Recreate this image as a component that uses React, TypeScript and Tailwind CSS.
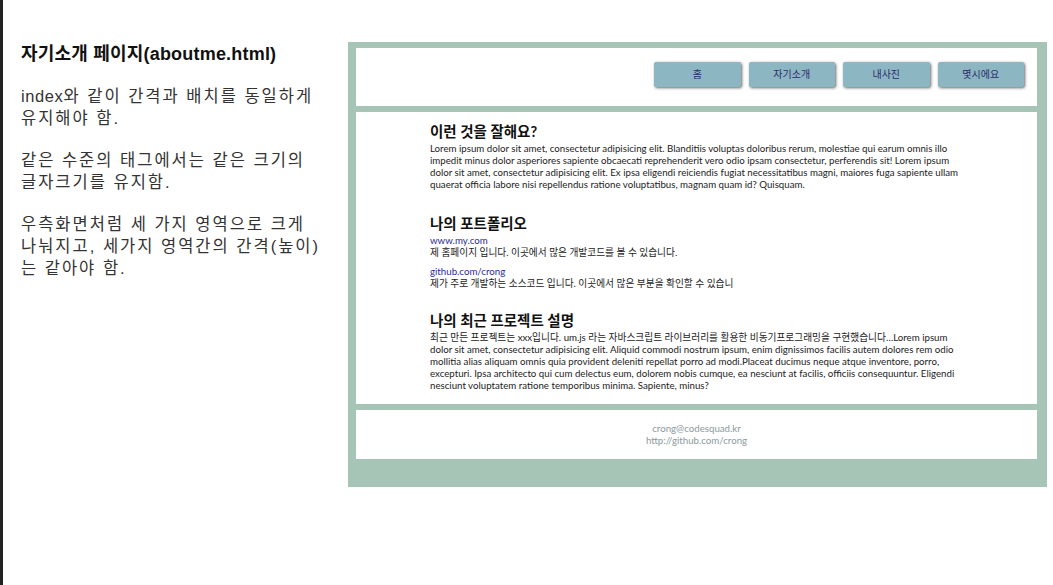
const sans = "font-['Liberation_Sans','Noto_Sans_CJK_KR',sans-serif]";
const body = "font-['Lato','Noto_Sans_CJK_KR',sans-serif]";

const navItems = ["홈", "자기소개", "내사진", "몇시에요"];

function Notes() {
	return (
		<aside className={`w-[345px] shrink-0 pl-[18px] pt-[44px] ${sans}`}>
			<h1 className="text-[18px] leading-[21px] font-bold tracking-[0.2px] text-[#111]">
				자기소개 페이지(aboutme.html)
			</h1>
			<div className="mt-[20px] w-[320px] text-[16.5px] leading-[22px] tracking-[2px] text-[#333]">
				<p>
					<span className="tracking-[0.6px]">index</span>와 같이 간격과 배치를 동일하게
					<br />
					유지해야 함.
				</p>
				<p className="mt-[20px]">
					같은 수준의 태그에서는 같은 크기의
					<br />
					글자크기를 유지함.
				</p>
				<p className="mt-[20px]">
					우측화면처럼 세 가지 영역으로 크게
					<br />
					나눠지고, 세가지 영역간의 간격(높이)
					<br />는 같아야 함.
				</p>
			</div>
		</aside>
	);
}

function Section({ title, className, children }: { title: string; className?: string; children: React.ReactNode }) {
	return (
		<section className={className}>
			<h2 className="mb-[1px] text-[14.5px] leading-[18px] font-bold text-[#111]">{title}</h2>
			{children}
		</section>
	);
}

function Mock() {
	return (
		<div className={`mt-[42px] flex h-[445px] w-[699px] flex-col gap-[6px] bg-[#a6c5b7] pt-[6px] pl-[8px] pr-[10px] ${body}`}>
			<header className="flex h-[58px] items-start justify-end gap-[8px] bg-white pt-[14px] pr-[13px]">
				{navItems.map((item) => (
					<button
						key={item}
						className="h-[25px] w-[86.5px] rounded-[2px] bg-[#8cb6c1] text-[10px] text-[#2c2a6e] shadow-[1px_1px_3px_#666]"
					>
						{item}
					</button>
				))}
			</header>
			<main className="flex h-[292px] flex-col bg-white pt-[11px] pl-[74px] pr-[75px] text-[9.7px] leading-[12px] text-[#222]">
				<Section title="이런 것을 잘해요?">
					<p>
						Lorem ipsum dolor sit amet, consectetur adipisicing elit. Blanditiis voluptas doloribus rerum, molestiae qui earum omnis illo impedit minus dolor asperiores sapiente obcaecati reprehenderit vero odio ipsam consectetur, perferendis sit! Lorem ipsum dolor sit amet, consectetur adipisicing elit. Ex ipsa eligendi reiciendis fugiat necessitatibus magni, maiores fuga sapiente ullam quaerat officia labore nisi repellendus ratione voluptatibus, magnam quam id? Quisquam.
					</p>
				</Section>
				<Section title="나의 포트폴리오" className="mt-[25px]">
					<a className="block text-[#2a2a9a]">www.my.com</a>
					<p>제 홈페이지 입니다. 이곳에서 많은 개발코드를 볼 수 있습니다.</p>
					<a className="mt-[7px] block text-[#2a2a9a]">github.com/crong</a>
					<p>제가 주로 개발하는 소스코드 입니다. 이곳에서 많은 부분을 확인할 수 있습니</p>
				</Section>
				<Section title="나의 최근 프로젝트 설명" className="mt-[23px]">
					<p>
						최근 만든 프로젝트는 xxx입니다. um.js 라는 자바스크립트 라이브러리를 활용한 비동기프로그래밍을 구현했습니다…Lorem ipsum dolor sit amet, consectetur adipisicing elit. Aliquid commodi nostrum ipsum, enim dignissimos facilis autem dolores rem odio mollitia alias aliquam omnis quia provident deleniti repellat porro ad modi.Placeat ducimus neque atque inventore, porro, excepturi. Ipsa architecto qui cum delectus eum, dolorem nobis cumque, ea nesciunt at facilis, officiis consequuntur. Eligendi nesciunt voluptatem ratione temporibus minima. Sapiente, minus?
					</p>
				</Section>
			</main>
			<footer className="flex h-[49px] flex-col items-center justify-center bg-white pb-[2px] text-[9.7px] leading-[12px] text-[#8a9a9c]">
				<div>crong@codesquad.kr</div>
				<div>http://github.com/crong</div>
			</footer>
		</div>
	);
}

export default function App() {
	return (
		<div className="flex h-[585px] w-[1053px] overflow-hidden border-l-[3px] border-[#222] bg-white">
			<Notes />
			<Mock />
		</div>
	);
}
